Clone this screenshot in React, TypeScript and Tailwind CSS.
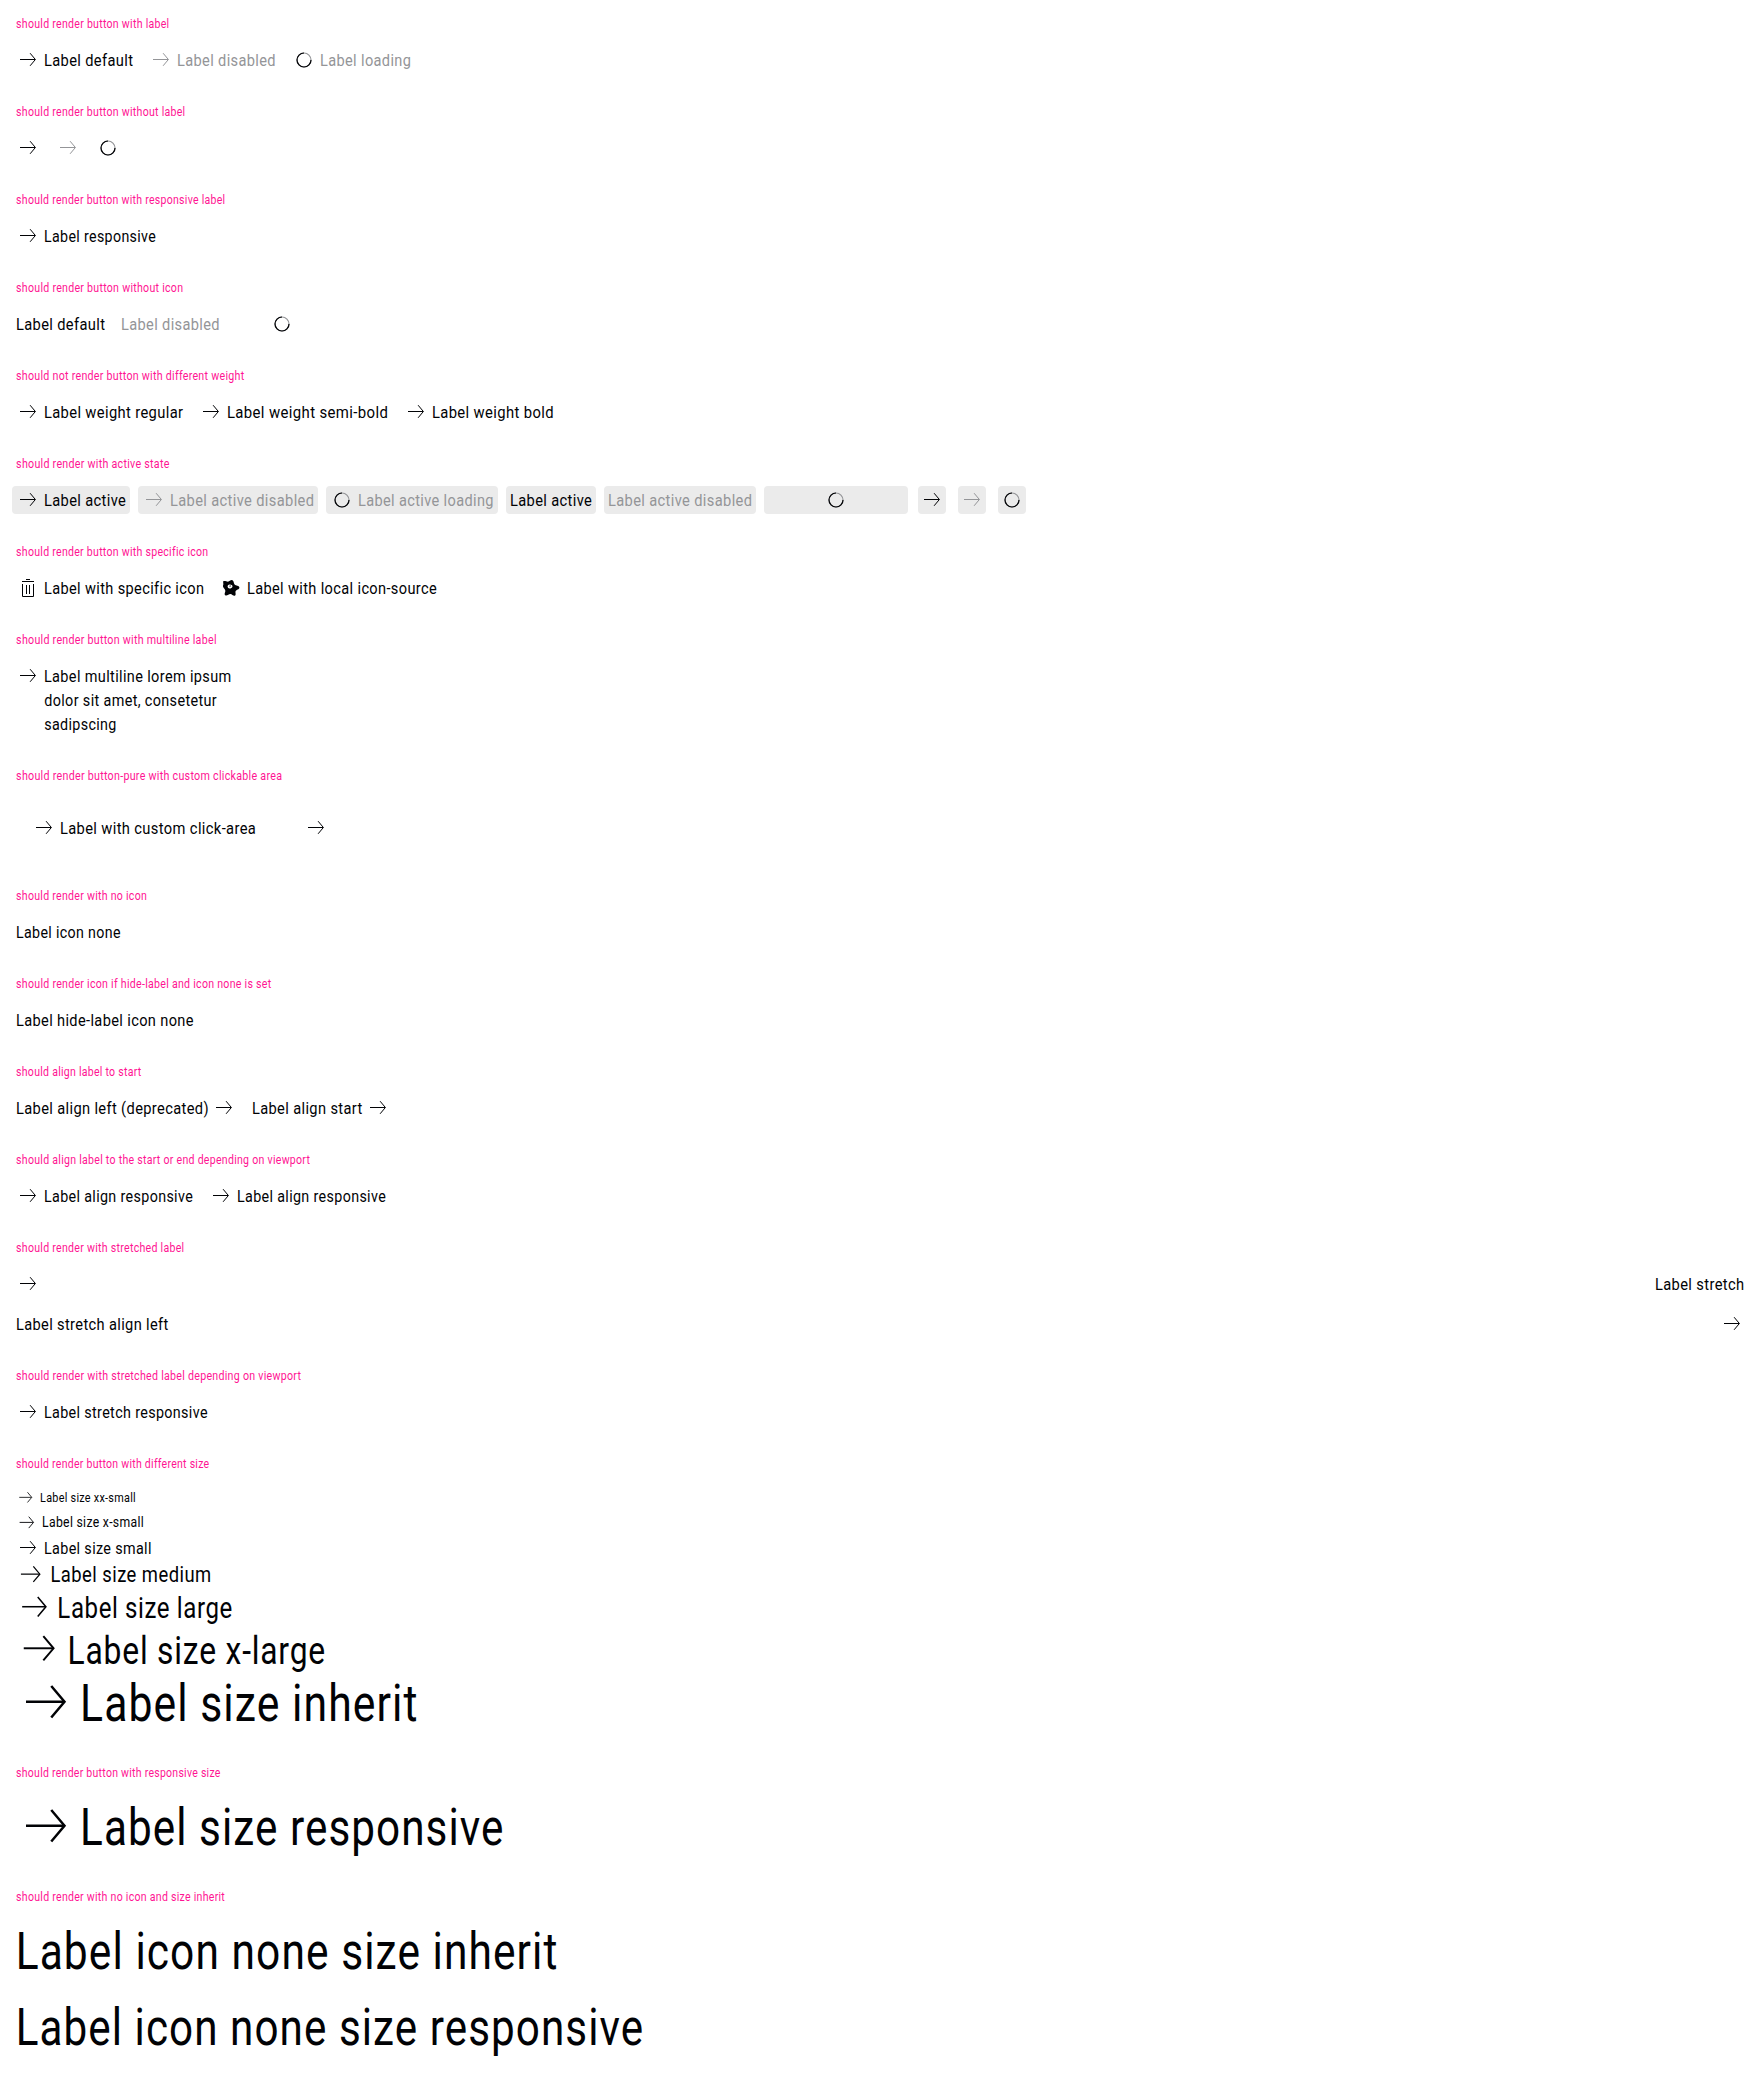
import React, { useLayoutEffect, useRef, useState } from "react";

const FONT = '"Roboto", sans-serif';
const TRACKING = 0.025;

type FitProps = {
  text: string;
  /** width of the drawn letters, px */
  ink: number;
  /** space before the first letter, px */
  lead?: number;
  /** advance width of the label, px */
  width?: number;
  className?: string;
};

/** A single line of text, condensed so that its letters span `ink` pixels. */
function Fit({ text, ink, lead = 0.8, width, className = "" }: FitProps) {
  const ref = useRef<HTMLSpanElement>(null);
  const [t, setT] = useState({ scale: 0.9, shift: 0 });
  useLayoutEffect(() => {
    const el = ref.current;
    const ctx = document.createElement("canvas").getContext("2d");
    if (!el || !ctx) return;
    const size = parseFloat(getComputedStyle(el).fontSize);
    ctx.font = `${size}px ${FONT}`;
    const m = ctx.measureText(text);
    const left = -m.actualBoundingBoxLeft;
    const natural = m.actualBoundingBoxRight - left + (text.length - 1) * size * TRACKING;
    const scale = ink / natural;
    setT({ scale, shift: lead - left * scale });
  }, [text, ink, lead]);
  return (
    <span className={`block shrink-0 whitespace-nowrap ${className}`} style={{ width: width ?? ink + lead + 0.5 }}>
      <span
        ref={ref}
        className="inline-block origin-top-left align-top tracking-[0.025em]"
        style={{ transform: `translateX(${t.shift}px) scaleX(${t.scale})` }}
      >
        {text}
      </span>
    </span>
  );
}

function Arrow({ className = "size-6" }: { className?: string }) {
  return (
    <svg viewBox="0 0 24 24" className={`block shrink-0 ${className}`} fill="none" stroke="currentColor">
      <path d="M4 11.5H19.2" />
      <path d="M14.1 5.2L19.4 11.5L14.1 17.8" />
    </svg>
  );
}

function Spinner() {
  return (
    <svg viewBox="0 0 24 24" className="block size-6 shrink-0" fill="none" strokeWidth="1.2">
      <circle cx="12" cy="12" r="7" stroke="#949598" />
      <path d="M12 5A7 7 0 1 0 19 12" stroke="#010205" />
    </svg>
  );
}

function Trash() {
  return (
    <svg viewBox="0 0 24 24" className="block size-6 shrink-0" fill="none" stroke="currentColor">
      <path d="M10 3.5H14M6 5.5H18M6.5 8V20.5H17.5V8M10.5 9V18M13.5 9V18" />
    </svg>
  );
}

function Badge() {
  return (
    <svg viewBox="0 0 24 24" className="block size-6 shrink-0" fill="currentColor">
      <path
        fillRule="evenodd"
        d="M4.2 5.2C6.5 4.6 8 6.2 9.6 5.6C11 5 11.8 3.8 13.4 4.2C15 4.8 14.6 7.4 15.6 8.6C17 9.8 20 9.6 20.4 11.4C20.4 13.4 17.4 13.6 16.6 15C16 16.6 17.4 18.4 16 19.8C14 20.2 13 18 11.4 18C9.6 18 8.2 20 6.2 19.2C4.8 17.6 6.8 16 6.2 14.2C5.8 12.6 3.4 11.4 4 9.6C4.8 8.4 4 7 4.2 5.2ZM11 8.4C9.4 8.2 8.4 9.4 8.6 10.6C8.8 12.2 10 12.8 11.4 12.4C12.8 12 13.8 11.2 13.4 10C13.2 8.8 12.2 8.6 11 8.4Z"
      />
      <path d="M11.6 8.8L12.2 10.6L10.4 11.2L10.2 9.8Z" opacity=".5" />
    </svg>
  );
}

function Section({ title, ink, children, className = "" }: { title: string; ink: number; children: React.ReactNode; className?: string }) {
  return (
    <section className="mb-8">
      <h2 className="mb-4 h-4 text-[12.7px] leading-4 text-[#ff1493]">
        <Fit text={title} ink={ink} lead={0.1} />
      </h2>
      <div className={`flex ${className || "gap-4"}`}>{children}</div>
    </section>
  );
}

type ButtonProps = {
  label?: string;
  ink?: number;
  width?: number;
  icon?: React.ReactNode;
  end?: boolean;
  disabled?: boolean;
  className?: string;
};

function Pure({ label, ink = 0, width, icon, end, disabled, className = "" }: ButtonProps) {
  return (
    <button
      type="button"
      className={`flex items-start gap-1 text-left ${end ? "flex-row-reverse" : ""} ${disabled ? "text-[#949598]" : "text-[#010205]"} ${className}`}
    >
      {icon}
      {label && <Fit text={label} ink={ink} width={width} />}
    </button>
  );
}

/** Loading button without an icon: the spinner takes the middle of the label's width. */
function Loading({ className }: { className: string }) {
  return (
    <button type="button" className={`flex justify-center ${className}`}>
      <Spinner />
    </button>
  );
}

const ACTIVE = "-mx-1 -my-0.5 rounded-[4px] bg-[#ebebeb] px-1 py-0.5";
const ACTIVE_ICON = "-m-0.5 rounded-[4px] bg-[#ebebeb] p-0.5";

const SIZES = [
  { label: "Label size xx-small", ink: 94.7, lead: 0.9, row: "mb-[4.5px] h-[19.5px] text-[12.7px] leading-[19.5px]", icon: "size-[19.5px]" },
  { label: "Label size x-small", ink: 100.3, lead: 0.9, row: "mb-[2.3px] h-[21.7px] text-[14.8px] leading-[21.7px]", icon: "size-[21.7px]" },
  { label: "Label size small", ink: 105.7, lead: 0.8, row: "h-6 text-[17px] leading-6", icon: "size-6" },
  { label: "Label size medium", ink: 159.3, lead: 1.3, row: "h-[29.5px] text-[22.4px] leading-[29.5px]", icon: "size-[29.5px]" },
  { label: "Label size large", ink: 173, lead: 2, row: "h-[37px] text-[29px] leading-[39px]", icon: "size-[37px]" },
  { label: "Label size x-large", ink: 254, lead: 3, row: "h-[46.5px] text-[38.5px] leading-[50px]", icon: "size-[46.5px]" },
  { label: "Label size inherit", ink: 333.3, lead: 3.4, row: "h-[60px] text-[51.5px] leading-[62px]", icon: "size-[60px]" },
];

export default function App() {
  return (
    <main className="h-[2074px] w-[1760px] overflow-hidden bg-white p-4 font-[Roboto,sans-serif] text-[17px] leading-6 text-[#010205]">
      <Section title="should render button with label" ink={153}>
        <Pure icon={<Arrow />} label="Label default" ink={87.7} width={89} />
        <Pure icon={<Arrow />} label="Label disabled" ink={97.3} width={99} disabled />
        <Pure icon={<Spinner />} label="Label loading" ink={89.7} width={91} disabled />
      </Section>
      <Section title="should render button without label" ink={169}>
        <Pure icon={<Arrow />} />
        <Pure icon={<Arrow />} disabled />
        <Pure icon={<Spinner />} />
      </Section>
      <Section title="should render button with responsive label" ink={209}>
        <Pure icon={<Arrow />} label="Label responsive" ink={111} />
      </Section>
      <Section title="should render button without icon" ink={166.9}>
        <Pure label="Label default" ink={87.7} width={89} />
        <Pure label="Label disabled" ink={97.3} width={99} disabled />
        <Loading className="w-[91px]" />
      </Section>
      <Section title="should not render button with different weight" ink={227.9}>
        <Pure icon={<Arrow />} label="Label weight regular" ink={138.4} width={139.3} />
        <Pure icon={<Arrow />} label="Label weight semi-bold" ink={159.5} width={161.2} />
        <Pure icon={<Arrow />} label="Label weight bold" ink={120.2} />
      </Section>
      <Section title="should render with active state" ink={153.5}>
        <Pure icon={<Arrow />} label="Label active" ink={81} width={82} className={ACTIVE} />
        <Pure icon={<Arrow />} label="Label active disabled" ink={142.7} width={144} disabled className={ACTIVE} />
        <Pure icon={<Spinner />} label="Label active loading" ink={134.2} width={136} disabled className={ACTIVE} />
        <Pure label="Label active" ink={81} width={82} className={ACTIVE} />
        <Pure label="Label active disabled" ink={142.7} width={144} disabled className={ACTIVE} />
        <Loading className="-mx-1 -my-0.5 w-[144px] rounded-[4px] bg-[#ebebeb] px-1 py-0.5" />
        <Pure icon={<Arrow />} className={ACTIVE_ICON} />
        <Pure icon={<Arrow />} disabled className={ACTIVE_ICON} />
        <Pure icon={<Spinner />} className={ACTIVE_ICON} />
      </Section>
      <Section title="should render button with specific icon" ink={191.7}>
        <Pure icon={<Trash />} label="Label with specific icon" ink={158.3} width={159} />
        <Pure icon={<Badge />} label="Label with local icon-source" ink={188.9} />
      </Section>
      <Section title="should render button with multiline label" ink={200.3}>
        <button type="button" className="flex items-start gap-1 text-left">
          <Arrow />
          <span className="block">
            <Fit text="Label multiline lorem ipsum" ink={185.7} />
            <Fit text="dolor sit amet, consetetur" ink={172.7} lead={0.2} />
            <Fit text="sadipscing" ink={71.7} lead={0.2} />
          </span>
        </button>
      </Section>
      <Section title="should render button-pure with custom clickable area" ink={266}>
        <Pure icon={<Arrow />} label="Label with custom click-area" ink={194.8} width={196} className="p-4" />
        <Pure icon={<Arrow />} className="p-4" />
      </Section>
      <Section title="should render with no icon" ink={130.7}>
        <Pure label="Label icon none" ink={103.7} />
      </Section>
      <Section title="should render icon if hide-label and icon none is set" ink={255}>
        <Pure label="Label hide-label icon none" ink={176.7} />
      </Section>
      <Section title="should align label to start" ink={125}>
        <Pure end icon={<Arrow />} label="Label align left (deprecated)" ink={191} width={192} />
        <Pure end icon={<Arrow />} label="Label align start" ink={109} width={110} />
      </Section>
      <Section title="should align label to the start or end depending on viewport" ink={293.7}>
        <Pure icon={<Arrow />} label="Label align responsive" ink={147.9} width={149} />
        <Pure icon={<Arrow />} label="Label align responsive" ink={147.9} width={149} />
      </Section>
      <Section title="should render with stretched label" ink={168} className="flex-col gap-4">
        <Pure icon={<Arrow />} label="Label stretch" ink={88} width={89.2} className="w-full justify-between" />
        <Pure end icon={<Arrow />} label="Label stretch align left" ink={151} className="w-full justify-between" />
      </Section>
      <Section title="should render with stretched label depending on viewport" ink={284.7}>
        <Pure icon={<Arrow />} label="Label stretch responsive" ink={162.7} />
      </Section>
      <Section title="should render button with different size" ink={193.3} className="flex-col">
        {SIZES.map((s) => (
          <button key={s.label} type="button" className={`flex items-start gap-1 text-left ${s.row}`}>
            <Arrow className={s.icon} />
            <Fit text={s.label} ink={s.ink} lead={s.lead} />
          </button>
        ))}
      </Section>
      <Section title="should render button with responsive size" ink={204.5}>
        <button type="button" className="flex h-[60px] items-start gap-1 text-left text-[51.5px] leading-[62px]">
          <Arrow className="size-[60px]" />
          <Fit text="Label size responsive" ink={419} lead={3.4} />
        </button>
      </Section>
      <Section title="should render with no icon and size inherit" ink={208.6} className="flex-col gap-4 pt-px text-[51.5px] leading-[60px]">
        <Fit text="Label icon none size inherit" ink={537.7} lead={3} />
        <Fit text="Label icon none size responsive" ink={623} lead={3} />
      </Section>
    </main>
  );
}
